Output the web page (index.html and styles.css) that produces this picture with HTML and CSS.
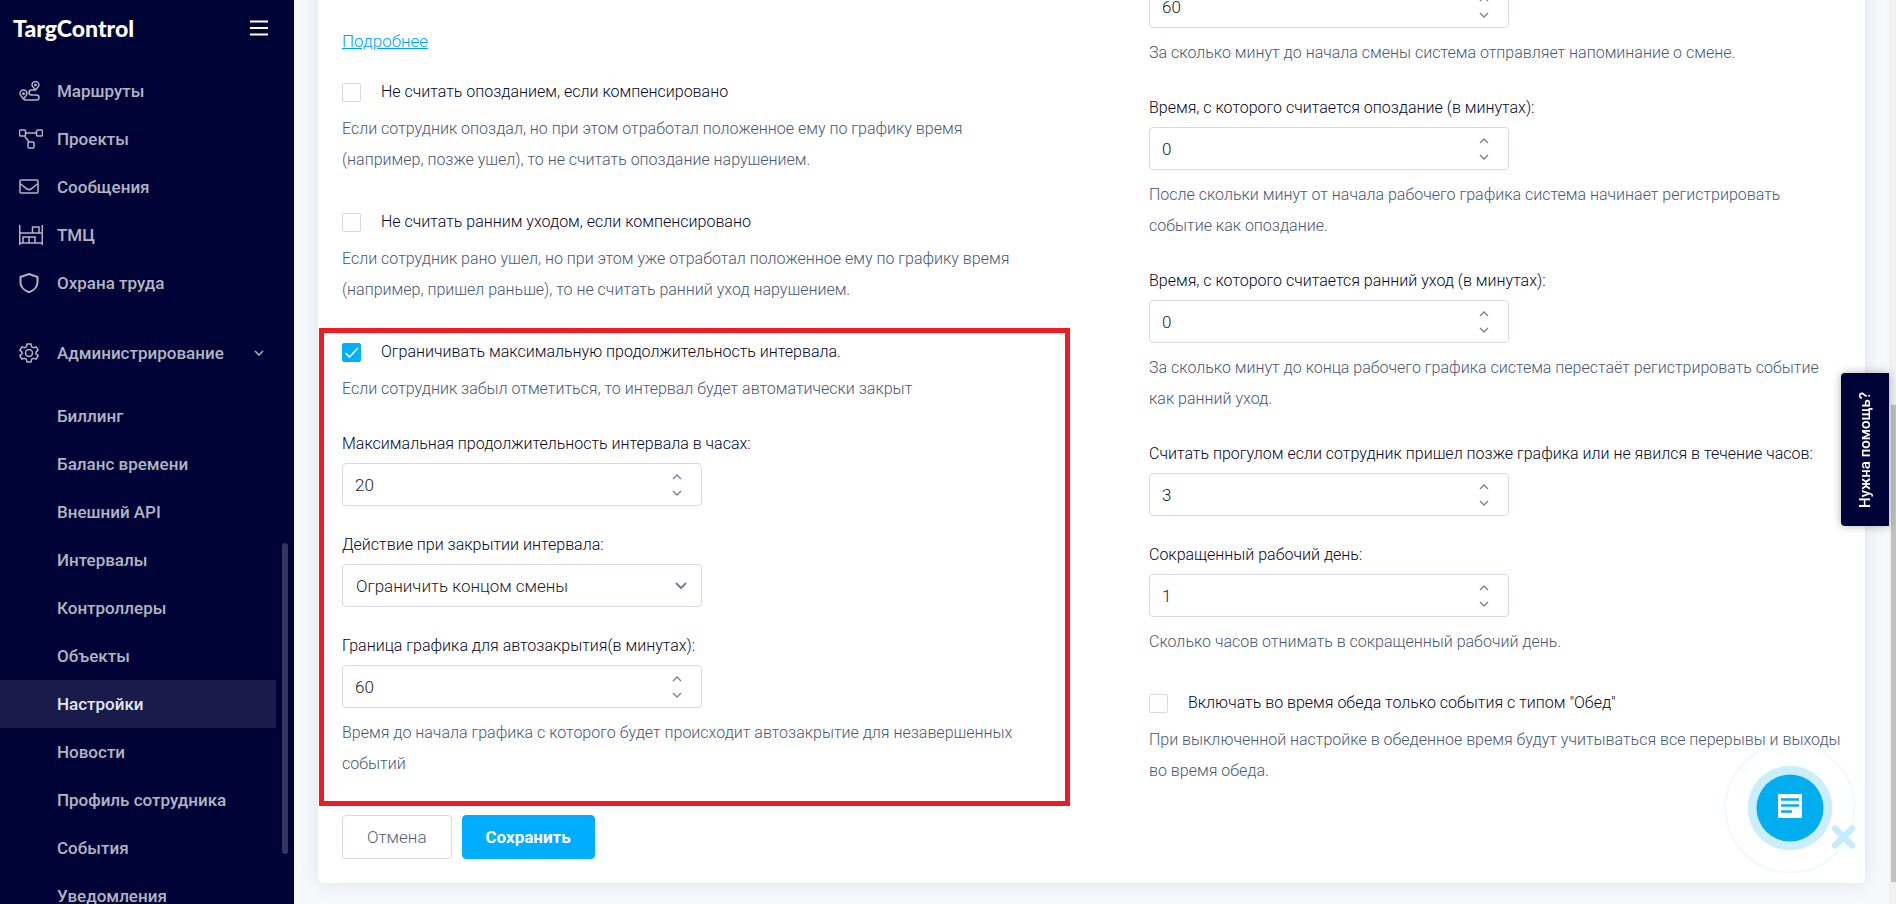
FILE: index.html
```html
<!DOCTYPE html>
<html lang="ru">
<head>
<meta charset="utf-8">
<title>TargControl</title>
<link rel="stylesheet" href="styles.css">
</head>
<body>
<svg class="sprite" aria-hidden="true">
  <symbol id="up" viewBox="0 0 10 6"><path d="M1 5l4-4 4 4"/></symbol>
  <symbol id="down" viewBox="0 0 10 6"><path d="M1 1l4 4 4-4"/></symbol>
</svg>
<div class="app">
  <aside class="sidebar">
    <header class="brand">
      <span class="logo">TargControl</span>
      <button class="burger" type="button" aria-label="Меню"><svg width="18" height="16" viewBox="0 0 18 16"><path d="M0 1.5h18M0 8h18M0 14.5h18"/></svg></button>
    </header>
    <nav class="nav">
      <a class="item" href="#"><svg class="icon" viewBox="0 0 24 20"><path d="M4.500 18C2.500 15.500 1 14 1 12.500a3.500 3.500 0 0 1 7 0C8 14 6.500 15.500 4.500 18zM16.500 9C14.500 6.500 13 5.500 13 4a3.500 3.500 0 0 1 7 0c0 1.500-1.500 2.500-3.500 5zM5 19h12.500a2.500 2.500 0 0 0 0-5H12.500a2.500 2.500 0 0 1 0-5h4"/><circle cx="4.500" cy="12.700" r=".7"/><circle cx="16.500" cy="4" r=".7"/></svg>Маршруты</a>
      <a class="item" href="#"><svg class="icon" viewBox="0 0 24 20"><path d="M1.500 1h4a1 1 0 0 1 1 1v4a1 1 0 0 1-1 1h-4a1 1 0 0 1-1-1V2a1 1 0 0 1 1-1zM18.500 1h4a1 1 0 0 1 1 1v4a1 1 0 0 1-1 1h-4a1 1 0 0 1-1-1V2a1 1 0 0 1 1-1zM10 13h4a1 1 0 0 1 1 1v4a1 1 0 0 1-1 1h-4a1 1 0 0 1-1-1v-4a1 1 0 0 1 1-1zM6.500 4h11M5.500 7l4.500 6"/></svg>Проекты</a>
      <a class="item" href="#"><svg class="icon" viewBox="0 0 24 20"><path d="M2 3h16a1 1 0 0 1 1 1v11a1 1 0 0 1-1 1H2a1 1 0 0 1-1-1V4a1 1 0 0 1 1-1zM1 6.500l6.500 5.200a4 4 0 0 0 5 0L19 6.500"/></svg>Сообщения</a>
      <a class="item" href="#"><svg class="icon" viewBox="0 0 24 20"><path d="M.7 0v20M23.300 0v20M.7 8h22.600M.7 18h22.600M13.500 8V2h6.500v6M4 18v-6h6v6M10 12h6v6"/></svg>ТМЦ</a>
      <a class="item" href="#"><svg class="icon" viewBox="0 0 24 20"><path class="bold" d="M10 1l8.500 3v5.500c0 4-3.500 8-8.500 9.700-5-1.700-8.500-5.700-8.500-9.700V4z"/></svg>Охрана труда</a>
    </nav>
    <button class="item group-title" type="button"><svg class="icon" viewBox="0 0 24 20"><path d="M8 1h4l.6 2.700 2 1.100 2.600-.9 1.900 3.400L17 9.200v1.600l2.100 1.900-1.900 3.400-2.600-.9-2 1.100L12 19H8l-.6-2.700-2-1.100-2.600.9-1.900-3.400L3 10.800V9.200L.9 7.300l1.900-3.400 2.600.9 2-1.100z"/><circle cx="10" cy="10" r="3.500"/></svg><span class="grow">Администрирование</span><svg class="chev" width="10" height="6"><use href="#down"/></svg></button>
    <nav class="subnav">
      <a class="item sub" href="#">Биллинг</a>
      <a class="item sub" href="#">Баланс времени</a>
      <a class="item sub" href="#">Внешний API</a>
      <a class="item sub" href="#">Интервалы</a>
      <a class="item sub" href="#">Контроллеры</a>
      <a class="item sub" href="#">Объекты</a>
      <a class="item sub active" href="#" aria-current="page">Настройки</a>
      <a class="item sub" href="#">Новости</a>
      <a class="item sub" href="#">Профиль сотрудника</a>
      <a class="item sub" href="#">События</a>
      <a class="item sub" href="#">Уведомления</a>
    </nav>
    <span class="side-thumb"></span>
  </aside>

  <main class="main">
    <form class="card">
      <div class="columns">
        <div class="column column-left">
          <a class="more" href="#">Подробнее</a>
          <div class="field">
            <div class="check"><input type="checkbox" id="late"><label for="late">Не считать опозданием, если компенсировано</label></div>
            <p class="help">Если сотрудник опоздал, но при этом отработал положенное ему по графику время (например, позже ушел), то не считать опоздание нарушением.</p>
          </div>
          <div class="field">
            <div class="check"><input type="checkbox" id="early"><label for="early">Не считать ранним уходом, если компенсировано</label></div>
            <p class="help">Если сотрудник рано ушел, но при этом уже отработал положенное ему по графику время (например, пришел раньше), то не считать ранний уход нарушением.</p>
          </div>
          <section class="highlight">
            <div class="field">
              <div class="check"><input type="checkbox" id="limit" checked><label for="limit">Ограничивать максимальную продолжительность интервала.</label></div>
              <p class="help">Если сотрудник забыл отметиться, то интервал будет автоматически закрыт</p>
            </div>
            <div class="field">
              <label class="label" for="max">Максимальная продолжительность интервала в часах:</label>
              <div class="control"><input class="value" type="number" id="max" value="20"><span class="spin"><button type="button" aria-label="Больше"><svg width="10" height="6"><use href="#up"/></svg></button><button type="button" aria-label="Меньше"><svg width="10" height="6"><use href="#down"/></svg></button></span></div>
            </div>
            <div class="field">
              <label class="label" for="action">Действие при закрытии интервала:</label>
              <div class="control"><select class="value" id="action"><option>Ограничить концом смены</option></select><svg class="arrow" width="12" height="8" viewBox="0 0 12 8"><path d="M1 1l5 5 5-5"/></svg></div>
            </div>
            <div class="field">
              <label class="label" for="border">Граница графика для автозакрытия(в минутах):</label>
              <div class="control"><input class="value" type="number" id="border" value="60"><span class="spin"><button type="button" aria-label="Больше"><svg width="10" height="6"><use href="#up"/></svg></button><button type="button" aria-label="Меньше"><svg width="10" height="6"><use href="#down"/></svg></button></span></div>
              <p class="help">Время до начала графика с которого будет происходит автозакрытие для незавершенных событий</p>
            </div>
          </section>
        </div>

        <div class="column column-right">
          <div class="field">
            <div class="control"><input class="value" type="number" aria-label="Напоминание о смене" value="60"><span class="spin"><button type="button" aria-label="Больше"><svg width="10" height="6"><use href="#up"/></svg></button><button type="button" aria-label="Меньше"><svg width="10" height="6"><use href="#down"/></svg></button></span></div>
            <p class="help">За сколько минут до начала смены система отправляет напоминание о смене.</p>
          </div>
          <div class="field">
            <label class="label" for="lateFrom">Время, с которого считается опоздание (в минутах):</label>
            <div class="control"><input class="value" type="number" id="lateFrom" value="0"><span class="spin"><button type="button" aria-label="Больше"><svg width="10" height="6"><use href="#up"/></svg></button><button type="button" aria-label="Меньше"><svg width="10" height="6"><use href="#down"/></svg></button></span></div>
            <p class="help">После скольки минут от начала рабочего графика система начинает регистрировать событие как опоздание.</p>
          </div>
          <div class="field">
            <label class="label" for="earlyFrom">Время, с которого считается ранний уход (в минутах):</label>
            <div class="control"><input class="value" type="number" id="earlyFrom" value="0"><span class="spin"><button type="button" aria-label="Больше"><svg width="10" height="6"><use href="#up"/></svg></button><button type="button" aria-label="Меньше"><svg width="10" height="6"><use href="#down"/></svg></button></span></div>
            <p class="help">За сколько минут до конца рабочего графика система перестаёт регистрировать событие<br>как ранний уход.</p>
          </div>
          <div class="field">
            <label class="label" for="absence">Считать прогулом если сотрудник пришел позже графика или не явился в течение часов:</label>
            <div class="control"><input class="value" type="number" id="absence" value="3"><span class="spin"><button type="button" aria-label="Больше"><svg width="10" height="6"><use href="#up"/></svg></button><button type="button" aria-label="Меньше"><svg width="10" height="6"><use href="#down"/></svg></button></span></div>
          </div>
          <div class="field">
            <label class="label" for="short">Сокращенный рабочий день:</label>
            <div class="control"><input class="value" type="number" id="short" value="1"><span class="spin"><button type="button" aria-label="Больше"><svg width="10" height="6"><use href="#up"/></svg></button><button type="button" aria-label="Меньше"><svg width="10" height="6"><use href="#down"/></svg></button></span></div>
            <p class="help">Сколько часов отнимать в сокращенный рабочий день.</p>
          </div>
          <div class="field">
            <div class="check"><input type="checkbox" id="lunch"><label for="lunch">Включать во время обеда только события с типом "Обед"</label></div>
            <p class="help nowrap">При выключенной настройке в обеденное время будут учитываться все перерывы и выходы<br>во время обеда.</p>
          </div>
        </div>
      </div>
      <div class="actions">
        <button class="btn" type="button">Отмена</button>
        <button class="btn primary" type="submit">Сохранить</button>
      </div>
    </form>
  </main>

  <div class="scrollbar"><span class="thumb"></span></div>
</div>

<button class="help-tab" type="button"><span>Нужна помощь?</span></button>
<button class="chat" type="button" aria-label="Чат">
  <svg width="132" height="132" viewBox="0 0 132 132">
    <circle cx="66" cy="66" r="64.500" fill="none" stroke="#00aeef" stroke-opacity=".07" stroke-width="1.500"/>
    <circle cx="66" cy="66" r="42.300" fill="#caeefb"/>
    <circle cx="66" cy="66" r="33.500" fill="#00aeef"/>
    <rect x="54" y="52" width="24" height="24" rx="1" fill="#fff"/>
    <path d="M57 57.500h18M57 63.500h18M57 69.500h11" stroke="#00aeef" stroke-width="2.600" fill="none"/>
    <path d="M111 86.500l17 17M128 86.500l-17 17" stroke="#c4ecfa" stroke-width="6.500" stroke-linecap="round" fill="none"/>
  </svg>
</button>
</body>
</html>
```
FILE: styles.css
```css
* { box-sizing: border-box; }

body {
  margin: 0;
  overflow: hidden;
  background: #f6f8fc;
  font: 16px/24px Roboto, sans-serif;
  color: #06081f;
}

button, input, select { font: inherit; }
button { padding: 0; border: 0; background: none; cursor: pointer; }
svg { display: block; fill: none; stroke: currentColor; }
.sprite { position: absolute; width: 0; height: 0; }

.app { display: flex; height: 100vh; }

/* Sidebar */
.sidebar {
  position: relative;
  flex: 0 0 294px;
  overflow: hidden;
  background: #000336;
  color: #b3b4c3;
}
.brand {
  display: flex;
  align-items: center;
  justify-content: space-between;
  height: 56px;
  padding: 0 26px 0 13px;
  margin-bottom: 11px;
  color: #fff;
}
.logo { font: 900 23px/24px Lato, sans-serif; }
.burger { color: #fff; }
.burger svg { stroke-width: 2; }
.item {
  display: flex;
  align-items: center;
  width: 276px;
  height: 48px;
  padding-left: 19px;
  color: inherit;
  font-size: 17px;
  font-weight: 500;
  text-align: left;
  text-decoration: none;
}
.icon { width: 24px; height: 20px; margin-right: 14px; stroke-width: 1.5; }
.icon .bold { stroke-width: 2; }
.group-title { margin: 22px 0 15px; }
.grow { flex: 1; }
.chev { margin-right: 12px; stroke-width: 1.5; }
.sub { padding-left: 57px; }
.active { background: #191c4b; color: #e6e6eb; }
.side-thumb {
  position: absolute;
  top: 543px;
  right: 6px;
  width: 6px;
  height: 311px;
  border-radius: 3px;
  background: #33365e;
}

/* Page is shown at the end of its scroll range */
.main {
  display: flex;
  flex: 1;
  flex-direction: column;
  justify-content: flex-end;
  min-width: 0;
  overflow: hidden;
  padding: 0 24px 21px;
}
.card {
  padding: 24px;
  border-radius: 5px;
  background: #fff;
  box-shadow: 0 0 20px rgba(20, 25, 60, 0.09);
}
.columns { display: grid; grid-template-columns: minmax(0, 1fr) minmax(0, 1fr); gap: 115px; }
.column { display: flex; flex-direction: column; gap: 28px; }
.column-left { align-self: end; padding-bottom: 7px; }
.column-right { gap: 27px; }
.more { align-self: flex-start; margin-bottom: -7px; color: #00a2f0; font-size: 17px; font-weight: 300; }
.check { display: flex; align-items: center; gap: 20px; padding-top: 6px; font-weight: 300; }
.check input {
  width: 19px;
  height: 19px;
  margin: 0;
  border: 1px solid #d8d8ea;
  border-radius: 2px;
  appearance: none;
}
.check input:checked {
  border-color: #00aeff;
  background: #00aeff url("data:image/svg+xml,%3Csvg xmlns='http://www.w3.org/2000/svg' viewBox='0 0 17 17'%3E%3Cpath d='M2.500 9l4 4L15 4' fill='none' stroke='white' stroke-width='1.600'/%3E%3C/svg%3E") center / 17px no-repeat;
}
.help { margin: 9px 0 0; padding-bottom: 1px; color: #485872; font-weight: 300; line-height: 31px; }
.nowrap { white-space: nowrap; }
.label { display: block; margin-bottom: 7px; font-weight: 300; }
.control {
  display: flex;
  align-items: center;
  width: 360px;
  height: 43px;
  border: 1px solid #d8d8ea;
  border-radius: 4px;
  color: #718096;
}
.value {
  flex: 1;
  min-width: 0;
  height: 100%;
  padding: 0 12px;
  border: 0;
  background: none;
  color: #1c1c1c;
  font-size: 17px;
  font-weight: 300;
  appearance: none;
}
input.value { appearance: textfield; }
select.value { padding: 0 13px; }
.spin { display: flex; flex-direction: column; gap: 10px; margin-right: 19px; }
.spin button { color: inherit; }
.spin svg { stroke-width: 1.3; }
.arrow { margin-right: 14px; stroke-width: 2; }

.highlight { position: relative; display: flex; flex-direction: column; gap: 27px; }
.highlight::after {
  content: "";
  position: absolute;
  inset: -6px -36px -26px -23px;
  border: 5px solid #ed1c24;
  pointer-events: none;
}

.actions { display: flex; gap: 10px; margin-top: 28px; }
.btn {
  height: 44px;
  padding: 0 24px;
  border: 1px solid #d8d8ea;
  border-radius: 4px;
  color: #64748b;
  font-size: 17px;
}
.btn:not(.primary) { color: #4f5f78; font-weight: 300; }
.primary { padding: 0 23px; border-color: #00aeff; background: #00aeff; color: #fff; font-weight: 700; }

/* Page scrollbar */
.scrollbar { display: flex; flex: 0 0 7px; flex-direction: column; justify-content: flex-end; padding: 0 0 22px 2px; background: #f1f1f1; }
.thumb { height: 477px; background: #c1c1c1; }

/* Floating widgets */
.help-tab {
  position: fixed;
  top: 373px;
  right: 7px;
  display: flex;
  align-items: center;
  justify-content: center;
  width: 48px;
  height: 153px;
  border-radius: 4px 0 0 4px;
  background: #000336;
  box-shadow: 0 0 10px rgba(0, 0, 0, 0.3);
  color: #fff;
  font-size: 15px;
  font-weight: 500;
}
.help-tab span { writing-mode: vertical-rl; transform: rotate(180deg); }
.chat { position: fixed; right: 40px; bottom: 30px; }
.chat svg { overflow: visible; stroke: none; }
```
